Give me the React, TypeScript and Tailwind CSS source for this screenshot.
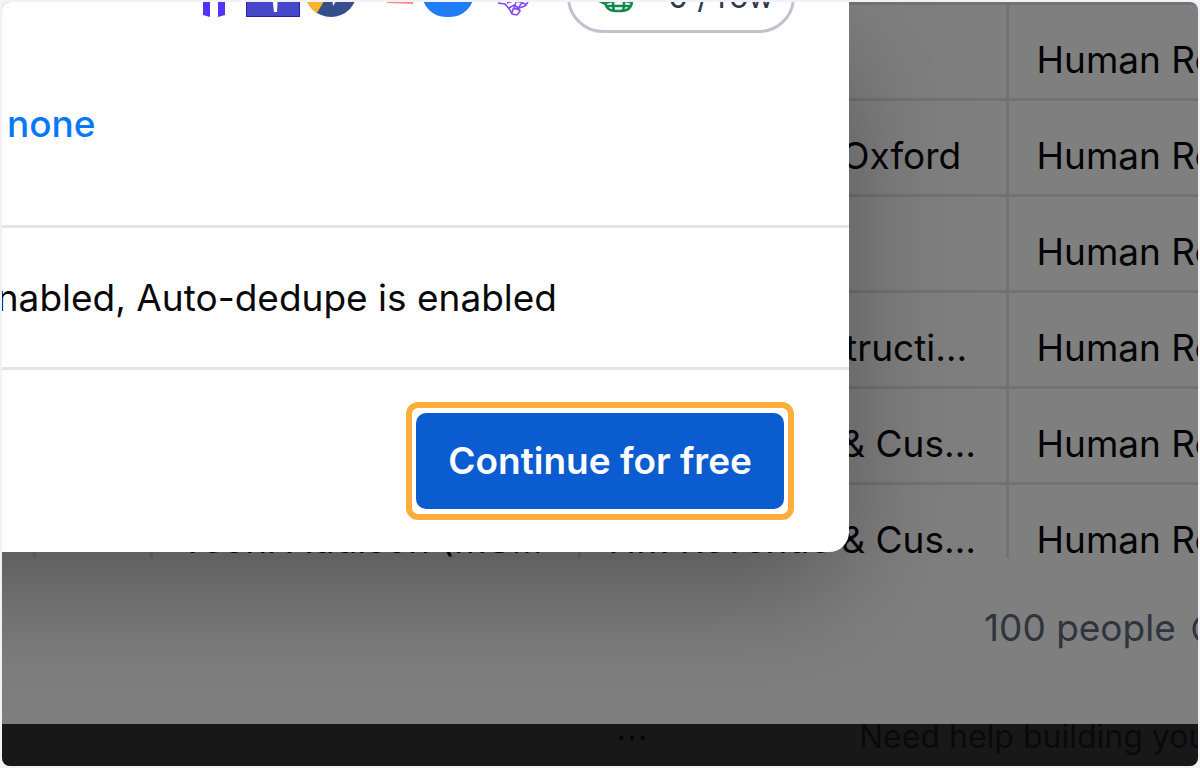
const rows = [
  { name: "Amira Lowe", company: "Bupa", field: "Human Resources" },
  { name: "Daniel Marsh", company: "University of Oxford", field: "Human Resources" },
  { name: "Priya Nair", company: "Unilever", field: "Human Resources" },
  { name: "Helen Brooks", company: "Hudson Construction Ltd", field: "Human Resources" },
  { name: "Tom Whitfield", company: "HM Revenue & Customs", field: "Human Resources" },
  { name: "Teoni Addison (MSc, CIPD)", company: "HM Revenue & Customs", field: "Human Resources" },
];

function PeopleTable() {
  return (
    <div className="flex h-[556px] flex-col overflow-hidden">
      <table className="w-full shrink-0 table-fixed border-collapse text-[37px] leading-[48px] text-[#09090b]">
        <colgroup>
          <col className="w-8" />
          <col className="w-[117px]" />
          <col className="w-[428px]" />
          <col className="w-[428px]" />
          <col />
        </colgroup>
        <tbody>
          {rows.map((row, i) => (
            <tr key={i} className="h-24 border-t-[3px] border-[#e2e5e9]">
              <td className="border-r-[3px] border-[#e2e5e9]" />
              <td className="border-r-[3px] border-[#e2e5e9]" />
              <td className="truncate border-r-[3px] border-[#e2e5e9] px-7 pt-4">{row.name}</td>
              <td className="truncate border-r-[3px] border-[#e2e5e9] px-7 pt-4">{row.company}</td>
              <td className="overflow-hidden pt-4 pl-7 whitespace-nowrap">{row.field}</td>
            </tr>
          ))}
        </tbody>
      </table>
    </div>
  );
}

function ProviderLogos() {
  return (
    <div className="mb-4 flex items-end">
      <svg width="52" height="52" viewBox="0 0 52 52" className="mr-[6px]">
        <path d="M15 0h7v52l-7-2zM30 0h7v50l-7 2z" fill="#4f33ff" />
      </svg>
      <svg width="54" height="52" viewBox="0 0 54 52" className="mr-[5px]">
        <path d="M0 0h54v52H0z" fill="#4747cb" />
        <path d="M.5 0v51.5h53V0" fill="none" stroke="#2a20a8" />
        <path d="M26 30h6l-1 17h-3z" fill="#fff" />
      </svg>
      <svg width="52" height="52" viewBox="0 0 52 52" className="mr-[30px]">
        <circle cx="26" cy="26" r="26" fill="#344f8c" />
        <path d="M0 26a26 26 0 0 0 12 22L22 31z" fill="#ffb32c" />
        <path d="M27 30h8l-7 11z" fill="#fff" />
      </svg>
      <svg width="26" height="52" viewBox="0 0 26 52" className="mr-[9px]">
        <path d="M0 20h26v19L0 38z" fill="#ff8a84" />
      </svg>
      <svg width="52" height="52" viewBox="0 0 52 52" className="mr-[21px]">
        <rect width="52" height="52" rx="24" fill="#207df8" />
      </svg>
      <svg width="36" height="52" viewBox="0 0 36 52" fill="none" stroke="#8548f5" strokeWidth="1.5">
        <path d="M3 38l7 1 5 6 2 4 5 1 3-4-1-3 6-2 3-4M12 38l6-2 8 1 6 3M14 43l5-3 5 3M17 48l1-4 7-1M21 37l-2 6 5 2M28 36l-4 6" />
      </svg>
    </div>
  );
}

function CostPill() {
  return (
    <button className="flex h-[72px] items-center rounded-full border-[3px] border-[#bfc3ce] pr-[18px] pl-[26px] text-[32px] leading-[40px] text-[#2d394d]">
      <svg width="40" height="48" viewBox="0 0 40 48" fill="none" stroke="#11884a" strokeWidth="2.5" className="mr-8">
        <path d="M9 30c2 7 6 8 14 8s12-2 13-9M11 33h23M17 33l1 5M28 33l-1 5M1 27l9 4M10 30c6-3 20-3 26 0M17 28v5M28 28v5" />
      </svg>
      0 / row
    </button>
  );
}

function EnrichModal() {
  return (
    <section
      role="dialog"
      aria-label="Enrichment"
      className="-ml-60 min-w-0 flex-1 rounded-br-[20px] bg-white shadow-[0_42px_120px_-11px_rgba(0,0,0,0.35)]"
    >
      <div className="flex h-[31px] items-end justify-end pr-[54px]">
        <ProviderLogos />
        <div className="ml-9 shrink-0">
          <CostPill />
        </div>
      </div>
      <div className="flex h-[195px] items-start border-b-[3px] border-[#e2e5e9] pt-[67px] pl-[245px]">
        <a href="#none" className="text-[37px] leading-[48px] font-medium text-[#0878f9]">
          none
        </a>
      </div>
      <div className="flex h-[142px] items-center border-b-[3px] border-[#e2e5e9]">
        <div className="flex w-[795px] justify-end text-[37px] leading-[48px] whitespace-nowrap text-[#09090b]">
          Auto-update is enabled, Auto-dedupe is enabled
        </div>
      </div>
      <div className="flex justify-end px-[55px] py-8">
        <div className="rounded-xl border-[6px] border-[#ffad3b] px-1 py-[5px]">
          <button className="block h-24 rounded-[10px] bg-[#0b5cd1] px-8 text-[37px] leading-[48px] font-semibold text-white">
            Continue for free
          </button>
        </div>
      </div>
    </section>
  );
}

export default function App() {
  return (
    <div className="min-h-screen bg-[#f1f1f7] p-[2px] font-['Inter',sans-serif]">
      <main className="relative overflow-hidden rounded-lg bg-white">
        <PeopleTable />
        <div className="flex h-[166px] justify-end overflow-hidden pt-[46px]">
          <div className="flex w-[214px] items-start gap-3.5 text-[37px] leading-[48px] whitespace-nowrap text-[#5f6b7c]">
            100 people
            <svg width="36" height="36" viewBox="0 0 36 36" fill="none" stroke="currentColor" strokeWidth="3" className="mt-[7px] shrink-0">
              <circle cx="18" cy="18" r="14" />
              <path d="M18 16v9M18 10v2" />
            </svg>
          </div>
        </div>
        <footer className="flex h-[42px] items-center justify-end overflow-hidden bg-[#313131] pb-4 text-[32px] leading-[40px] whitespace-nowrap text-[#09090b]">
          <span className="w-[243px] shrink-0">⋯</span>
          <span className="w-[339px] shrink-0 text-[#12151c]">Need help building your table?</span>
        </footer>
        <div className="absolute inset-0 flex items-start bg-black/50 pr-[349px]">
          <EnrichModal />
        </div>
      </main>
    </div>
  );
}
